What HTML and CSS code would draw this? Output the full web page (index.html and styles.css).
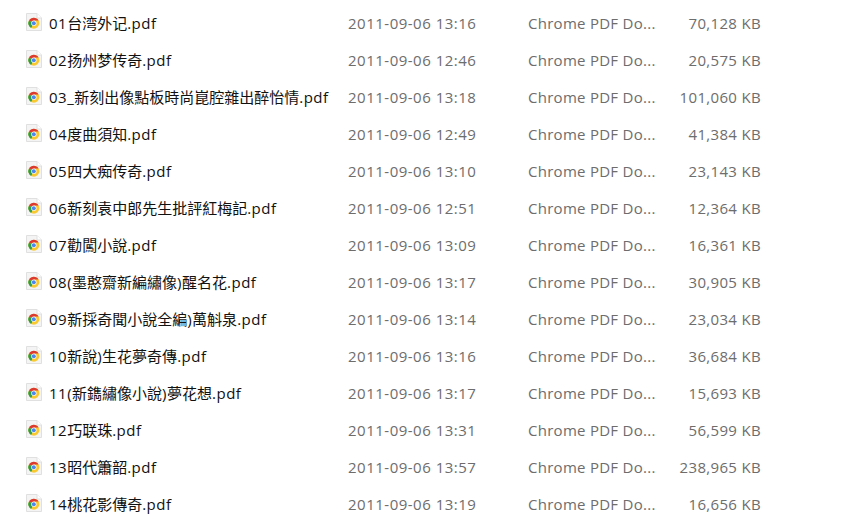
FILE: index.html
```html
<!DOCTYPE html>
<html lang="zh">

  <head>
    <meta charset="UTF-8">
    <title>PDF files</title>
    <link rel="stylesheet" href="styles.css">
  </head>

  <body>
    <svg class="defs" width="0" height="0">
      <symbol id="pdf-icon" viewBox="0 0 16 18">
        <path d="M0.5 0.5H11L15.5 5V17.5H0.5Z" fill="#f4f4f4" stroke="#e0e0e0"/>
        <path d="M11 0.5V5H15.5" fill="#fff" stroke="#e0e0e0"/>
        <circle cx="7.8" cy="10.2" r="5.5" fill="#f9c932"/>
        <path d="M7.8 10.2L3.04 7.45A5.5 5.5 0 0 1 12.56 7.45H7.8Z" fill="#dc3a2e"/>
        <path d="M7.8 10.2L5.05 14.96A5.5 5.5 0 0 1 3.04 7.45Z" fill="#2f9e48"/>
        <circle cx="7.8" cy="10.2" r="2.6" fill="#fff"/>
        <circle cx="7.8" cy="10.2" r="2" fill="#4a87ee"/>
      </symbol>
    </svg>

    <div class="file-list">
      <div class="row">
        <svg class="icon"><use href="#pdf-icon"/></svg>
        <span class="name"><span class="latin">01</span>台湾外记<span class="latin">.pdf</span></span>
        <span class="date">2011-09-06 13:16</span>
        <span class="type">Chrome PDF Do...</span>
        <span class="size">70,128 KB</span>
      </div>
      <div class="row">
        <svg class="icon"><use href="#pdf-icon"/></svg>
        <span class="name"><span class="latin">02</span>扬州梦传奇<span class="latin">.pdf</span></span>
        <span class="date">2011-09-06 12:46</span>
        <span class="type">Chrome PDF Do...</span>
        <span class="size">20,575 KB</span>
      </div>
      <div class="row">
        <svg class="icon"><use href="#pdf-icon"/></svg>
        <span class="name"><span class="latin">03_</span>新刻出像點板時尚崑腔雜出醉怡情<span class="latin">.pdf</span></span>
        <span class="date">2011-09-06 13:18</span>
        <span class="type">Chrome PDF Do...</span>
        <span class="size">101,060 KB</span>
      </div>
      <div class="row">
        <svg class="icon"><use href="#pdf-icon"/></svg>
        <span class="name"><span class="latin">04</span>度曲須知<span class="latin">.pdf</span></span>
        <span class="date">2011-09-06 12:49</span>
        <span class="type">Chrome PDF Do...</span>
        <span class="size">41,384 KB</span>
      </div>
      <div class="row">
        <svg class="icon"><use href="#pdf-icon"/></svg>
        <span class="name"><span class="latin">05</span>四大痴传奇<span class="latin">.pdf</span></span>
        <span class="date">2011-09-06 13:10</span>
        <span class="type">Chrome PDF Do...</span>
        <span class="size">23,143 KB</span>
      </div>
      <div class="row">
        <svg class="icon"><use href="#pdf-icon"/></svg>
        <span class="name"><span class="latin">06</span>新刻袁中郎先生批評紅梅記<span class="latin">.pdf</span></span>
        <span class="date">2011-09-06 12:51</span>
        <span class="type">Chrome PDF Do...</span>
        <span class="size">12,364 KB</span>
      </div>
      <div class="row">
        <svg class="icon"><use href="#pdf-icon"/></svg>
        <span class="name"><span class="latin">07</span>勸闖小說<span class="latin">.pdf</span></span>
        <span class="date">2011-09-06 13:09</span>
        <span class="type">Chrome PDF Do...</span>
        <span class="size">16,361 KB</span>
      </div>
      <div class="row">
        <svg class="icon"><use href="#pdf-icon"/></svg>
        <span class="name"><span class="latin">08(</span>墨憨齋新編繡像<span class="latin">)</span>醒名花<span class="latin">.pdf</span></span>
        <span class="date">2011-09-06 13:17</span>
        <span class="type">Chrome PDF Do...</span>
        <span class="size">30,905 KB</span>
      </div>
      <div class="row">
        <svg class="icon"><use href="#pdf-icon"/></svg>
        <span class="name"><span class="latin">09</span>新採奇聞小說全編<span class="latin">)</span>萬斛泉<span class="latin">.pdf</span></span>
        <span class="date">2011-09-06 13:14</span>
        <span class="type">Chrome PDF Do...</span>
        <span class="size">23,034 KB</span>
      </div>
      <div class="row">
        <svg class="icon"><use href="#pdf-icon"/></svg>
        <span class="name"><span class="latin">10</span>新說<span class="latin">)</span>生花夢奇傳<span class="latin">.pdf</span></span>
        <span class="date">2011-09-06 13:16</span>
        <span class="type">Chrome PDF Do...</span>
        <span class="size">36,684 KB</span>
      </div>
      <div class="row">
        <svg class="icon"><use href="#pdf-icon"/></svg>
        <span class="name"><span class="latin">11(</span>新鐫繡像小說<span class="latin">)</span>夢花想<span class="latin">.pdf</span></span>
        <span class="date">2011-09-06 13:17</span>
        <span class="type">Chrome PDF Do...</span>
        <span class="size">15,693 KB</span>
      </div>
      <div class="row">
        <svg class="icon"><use href="#pdf-icon"/></svg>
        <span class="name"><span class="latin">12</span>巧联珠<span class="latin">.pdf</span></span>
        <span class="date">2011-09-06 13:31</span>
        <span class="type">Chrome PDF Do...</span>
        <span class="size">56,599 KB</span>
      </div>
      <div class="row">
        <svg class="icon"><use href="#pdf-icon"/></svg>
        <span class="name"><span class="latin">13</span>昭代簫韶<span class="latin">.pdf</span></span>
        <span class="date">2011-09-06 13:57</span>
        <span class="type">Chrome PDF Do...</span>
        <span class="size">238,965 KB</span>
      </div>
      <div class="row">
        <svg class="icon"><use href="#pdf-icon"/></svg>
        <span class="name"><span class="latin">14</span>桃花影傳奇<span class="latin">.pdf</span></span>
        <span class="date">2011-09-06 13:19</span>
        <span class="type">Chrome PDF Do...</span>
        <span class="size">16,656 KB</span>
      </div>
    </div>
  </body>

</html>
```

FILE: styles.css
```css
html {
  font-family: "Open Sans", "Noto Sans CJK SC", sans-serif;
}

body {
  margin: 0;
  height: 519px;
  overflow: hidden;
  background-color: white;
}

.defs {
  position: absolute;
}

.file-list {
  padding: 4px 0 0 26px;
}

.row {
  display: grid;
  grid-template-columns: 23px 299px 180px 130px 103px;
  align-items: center;
  height: 37px;
  font-size: 15px;
  white-space: nowrap;
}

.icon {
  align-self: start;
  width: 16px;
  height: 18px;
  margin-top: 9px;
}

.name {
  color: #111;
}

/* the digits and .pdf run a little wider than the open sans ones */
.latin {
  letter-spacing: 0.5px;
}

.date,
.type,
.size {
  color: #6d6d6d;
}

.date {
  letter-spacing: 0.5px;
}

.type {
  letter-spacing: 0.27px;
}

.size {
  letter-spacing: 0.33px;
  text-align: right;
}
```
